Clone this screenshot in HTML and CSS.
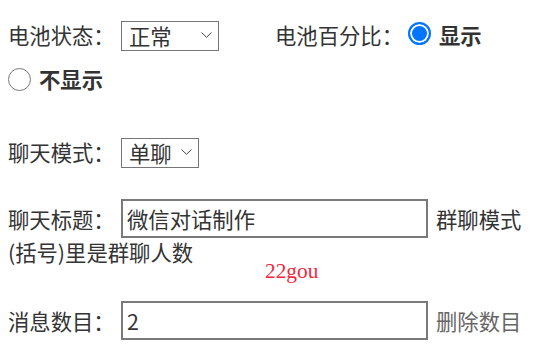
FILE: index.html
```html
<!DOCTYPE html>
<html lang="zh-CN">
<head>
<meta charset="utf-8">
<title>微信对话制作</title>
<link rel="stylesheet" href="styles.css">
</head>
<body>
<form class="page">
  <div class="row row-battery">
    <span class="label">电池状态：</span>
    <div class="select-wrap select-wide">
      <select class="select"><option>正常</option></select>
      <svg class="chev" width="11" height="6" viewBox="0 0 11 6"><path d="M0.5 0.5 L5.5 5.3 L10.5 0.5" fill="none" stroke="#444" stroke-width="1"/></svg>
    </div>
    <span class="label-inline">电池百分比：</span>
    <input type="radio" name="pct" class="radio" checked>
    <span class="radio-text">显示</span>
  </div>
  <div class="row row-radio2">
    <input type="radio" name="pct" class="radio">
    <span class="radio-text">不显示</span>
  </div>
  <div class="row row-mode">
    <span class="label">聊天模式：</span>
    <div class="select-wrap select-narrow">
      <select class="select"><option>单聊</option></select>
      <svg class="chev" width="11" height="6" viewBox="0 0 11 6"><path d="M0.5 0.5 L5.5 5.3 L10.5 0.5" fill="none" stroke="#444" stroke-width="1"/></svg>
    </div>
  </div>
  <div class="row row-title">
    <span class="label">聊天标题：</span>
    <input type="text" class="text-input" value="微信对话制作">
    <span class="after">群聊模式</span>
  </div>
  <p class="note">(括号)里是群聊人数</p>
  <p class="mark">22gou</p>
  <div class="row row-count">
    <span class="label">消息数目：</span>
    <input type="text" class="text-input" value="2">
    <span class="after after-muted">删除数目</span>
  </div>
</form>
</body>
</html>
```
FILE: styles.css
```css
html, body {
  margin: 0;
  padding: 0;
  background: #fff;
}
body {
  font-family: "Noto Sans CJK SC", "Noto Sans", sans-serif;
  font-size: 21.33px;
  color: #333;
}
.page {
  padding-left: 8px;
  width: 525px;
}
.row {
  display: flex;
  align-items: center;
}
.label {
  width: 113px;
  flex: none;
  line-height: 22px;
  white-space: nowrap;
}
.row-battery {
  margin-top: 20px;
  height: 30px;
}
.row-radio2 {
  margin-top: 17px;
  height: 24px;
}
.row-mode {
  margin-top: 46px;
  height: 30px;
}
.row-title {
  margin-top: 32px;
  height: 39px;
}
.row-count {
  margin-top: 20px;
  height: 39px;
}
.select-wrap {
  position: relative;
  height: 30px;
  flex: none;
}
.select-wide { width: 98px; }
.select-narrow { width: 78px; }
.select {
  appearance: none;
  -webkit-appearance: none;
  box-sizing: border-box;
  width: 100%;
  height: 100%;
  margin: 0;
  border: 1.5px solid #767676;
  border-radius: 0;
  background: #fff;
  font: inherit;
  color: #333;
  padding: 0 0 0 7px;
  line-height: 26px;
}
.chev {
  position: absolute;
  right: 7px;
  top: 12px;
  pointer-events: none;
}
.label-inline {
  margin-left: 56px;
  line-height: 22px;
  white-space: nowrap;
}
.radio {
  appearance: none;
  -webkit-appearance: none;
  box-sizing: border-box;
  width: 23px;
  height: 23px;
  margin: 0;
  border: 1.5px solid #767676;
  border-radius: 50%;
  background: #fff;
  flex: none;
}
.radio:checked {
  border: 2.5px solid #0075ff;
  background: #0075ff;
  box-shadow: inset 0 0 0 2px #fff;
}
.row-battery .radio {
  margin-left: 5px;
  margin-top: -4px;
}
.radio-text {
  font-weight: bold;
  margin-left: 8px;
  line-height: 22px;
  white-space: nowrap;
}
.text-input {
  box-sizing: border-box;
  width: 307px;
  height: 39px;
  margin: 0;
  border: 2px solid #7a7a7a;
  border-radius: 0;
  padding: 0 0 0 4px;
  font: inherit;
  color: #333;
  flex: none;
}
.after {
  margin-left: 8px;
  line-height: 22px;
  white-space: nowrap;
}
.after-muted {
  color: #666;
}
.note {
  margin: 3px 0 0;
  line-height: 22px;
}
.mark {
  margin: -2px 0 0;
  padding-left: 257px;
  font-family: "Liberation Serif", "DejaVu Serif", serif;
  font-size: 21.33px;
  line-height: 20px;
  color: #f3263b;
}
```
